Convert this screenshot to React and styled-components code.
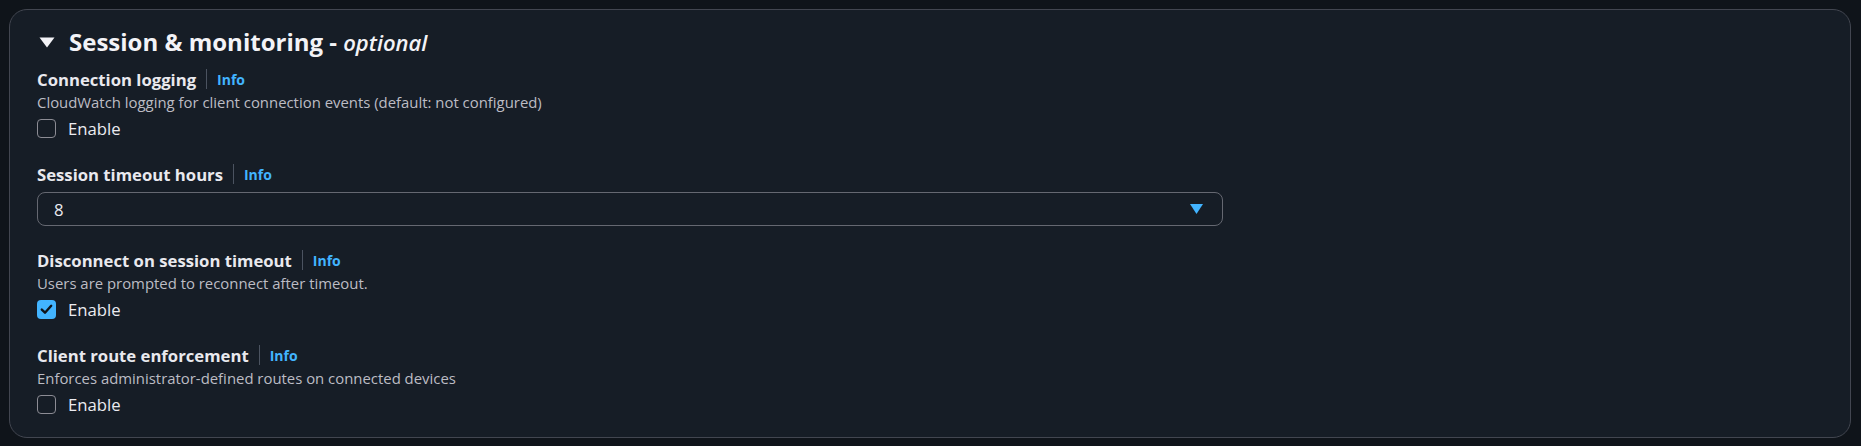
import styled, { createGlobalStyle } from "styled-components";

const GlobalStyle = createGlobalStyle`
    html, body {
        margin: 0;
        padding: 0;
        background-color: #0f141a;
    }
    body {
        font-family: "Open Sans", "Noto Sans", sans-serif;
        color: #dedee3;
    }
`;

const Page = styled.div`
    padding: 9px 10px 9px 9px;
`;

const Container = styled.section`
    background-color: #161d26;
    border: 1px solid #424650;
    border-radius: 18px;
    padding: 16px 27px 21px 27px;
`;

const Header = styled.h2`
    display: flex;
    align-items: center;
    gap: 14px;
    margin: 0;
    height: 31px;
    font-size: 24px;
    line-height: 31px;
    font-weight: 700;
    color: #f3f3f7;
`;

const Caret = styled.svg`
    width: 16px;
    height: 11px;
    margin-left: 2px;
    margin-top: 1px;
    flex-shrink: 0;
`;

const Optional = styled.i`
    font-size: 22px;
    font-weight: 600;
`;

const Fields = styled.div`
    display: flex;
    flex-direction: column;
    gap: 23px;
    margin-top: 11px;
`;

const Field = styled.div`
    display: flex;
    flex-direction: column;
`;

const LabelRow = styled.div`
    display: flex;
    align-items: center;
    height: 22px;
`;

const Label = styled.span`
    font-size: 16.7px;
    font-weight: 700;
    color: #e9e9ee;
`;

const Divider = styled.span`
    width: 1px;
    height: 20px;
    background-color: #4b5360;
    margin: 0 10px;
`;

const InfoLink = styled.a`
    font-size: 14px;
    font-weight: 700;
    color: #42b4ff;
    text-decoration: none;
    cursor: pointer;
`;

const Description = styled.div`
    font-size: 14.9px;
    line-height: 24px;
    color: #bcbcc4;
`;

const CheckRow = styled.label`
    display: flex;
    align-items: center;
    gap: 12px;
    height: 23px;
    margin-top: 3px;
    cursor: pointer;
`;

const Box = styled.span`
    display: flex;
    align-items: center;
    justify-content: center;
    box-sizing: border-box;
    width: 19px;
    height: 19px;
    border-radius: 4px;
    border: ${({ checked }) => (checked ? "none" : "1.5px solid #8c8c94")};
    background-color: ${({ checked }) => (checked ? "#42b4ff" : "transparent")};
`;

const CheckText = styled.span`
    font-size: 16.7px;
    color: #ebebf0;
`;

const SelectBox = styled.div`
    display: flex;
    align-items: center;
    justify-content: space-between;
    box-sizing: border-box;
    width: 1186px;
    height: 34px;
    margin-top: 7px;
    padding: 0 19px 0 16px;
    border: 1px solid #656871;
    border-radius: 8px;
    font-size: 16.7px;
    color: #ebebf0;
`;

const Arrow = styled.svg`
    width: 13px;
    height: 10px;
`;

const Checkbox = ({ checked, label }) => (
    <CheckRow>
        <Box checked={checked}>
            {checked && (
                <svg width="13" height="11" viewBox="0 0 13 11">
                    <path d="M1.8 5.6 L5 8.7 L11.2 1.8" fill="none" stroke="#0f141a" strokeWidth="2.4" strokeLinecap="round" strokeLinejoin="round" />
                </svg>
            )}
        </Box>
        <CheckText>{label}</CheckText>
    </CheckRow>
);

const FormField = ({ label, description, children }) => (
    <Field>
        <LabelRow>
            <Label>{label}</Label>
            <Divider />
            <InfoLink>Info</InfoLink>
        </LabelRow>
        {description && <Description>{description}</Description>}
        {children}
    </Field>
);

const App = () => (
    <Page>
        <GlobalStyle />
        <Container>
            <Header>
                <Caret viewBox="0 0 16 11">
                    <path d="M0.5 0.5 H15.5 L8 10.5 Z" fill="#f3f3f7" />
                </Caret>
                <span>
                    Session &amp; monitoring - <Optional>optional</Optional>
                </span>
            </Header>
            <Fields>
                <FormField
                    label="Connection logging"
                    description="CloudWatch logging for client connection events (default: not configured)"
                >
                    <Checkbox label="Enable" />
                </FormField>
                <FormField label="Session timeout hours">
                    <SelectBox>
                        <span>8</span>
                        <Arrow viewBox="0 0 13 10">
                            <path d="M0 0 H13 L6.5 10 Z" fill="#42b4ff" />
                        </Arrow>
                    </SelectBox>
                </FormField>
                <FormField
                    label="Disconnect on session timeout"
                    description="Users are prompted to reconnect after timeout."
                >
                    <Checkbox checked label="Enable" />
                </FormField>
                <FormField
                    label="Client route enforcement"
                    description="Enforces administrator-defined routes on connected devices"
                >
                    <Checkbox label="Enable" />
                </FormField>
            </Fields>
        </Container>
    </Page>
);

export default App;
